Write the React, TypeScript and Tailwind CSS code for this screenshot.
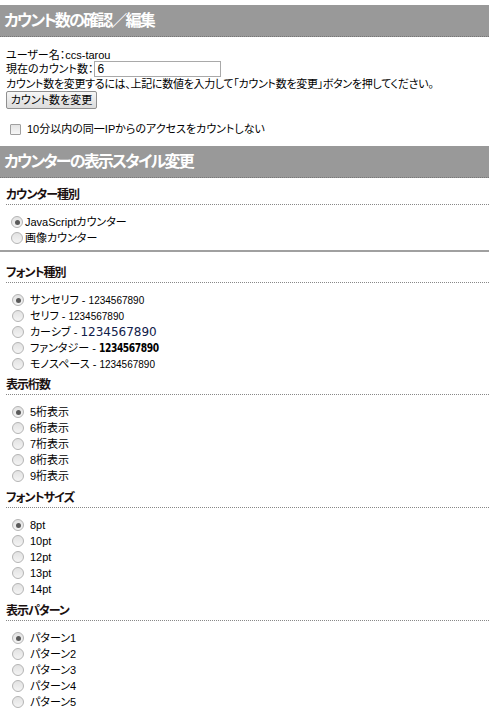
const jp = '"Liberation Sans", "Noto Sans CJK JP", sans-serif';

function Radio({ checked = false }: { checked?: boolean }) {
  return (
    <span className="inline-flex h-[12px] w-[12px] shrink-0 items-center justify-center rounded-full border border-[#b4b4b4] bg-gradient-to-b from-[#e2e2e2] to-[#f4f4f4]">
      {checked && <span className="h-[5px] w-[5px] rounded-full bg-[#5a5a5a]" />}
    </span>
  );
}

function Header({ title }: { title: string }) {
  return (
    <div className="flex h-8 items-center border-b border-dotted border-[#777] bg-[#999] pl-[4px]">
      <span className="text-[16px] font-bold tracking-[-1.8px] text-white" style={{ fontFeatureSettings: '"palt"' }}>
        {title}
      </span>
    </div>
  );
}

function SubHead({ label }: { label: string }) {
  return (
    <div className="ml-[6px] border-b border-dotted border-[#888] pb-[2px] text-[12px] font-bold leading-[14px] tracking-[-1px] text-[#1a1010]" style={{ fontFeatureSettings: '"palt"' }}>
      {label}
    </div>
  );
}

interface Opt {
  label: React.ReactNode;
}

function Options({ items, indent = 'pl-[12px]', gap = 'gap-[6px]' }: { items: Opt[]; indent?: string; gap?: string }) {
  return (
    <div className={`flex flex-col pt-[9px] ${indent}`}>
      {items.map((o, i) => (
        <div key={i} className={`flex h-[16px] items-center ${gap} text-[11px]`}>
          <Radio checked={i === 0} />
          <span style={{ fontFeatureSettings: '"palt"' }}>{o.label}</span>
        </div>
      ))}
    </div>
  );
}

export default function App() {
  const fonts: Opt[] = [
    { label: <>サンセリフ - <span className="text-[10px]">1234567890</span></> },
    { label: <>セリフ - <span className="text-[10px]">1234567890</span></> },
    { label: <>カーシブ - <span className="text-[12px] text-[#10204a]" style={{ fontFamily: '"DejaVu Sans", sans-serif' }}>1234567890</span></> },
    { label: <>ファンタジー - <span className="inline-block origin-left scale-x-[0.85] text-[12px] font-bold tracking-[-0.5px]" style={{ fontFamily: '"DejaVu Sans Condensed", "DejaVu Sans", sans-serif' }}>1234567890</span></> },
    { label: <>モノスペース - <span className="text-[10px]">1234567890</span></> },
  ];
  const digits = ['5桁表示', '6桁表示', '7桁表示', '8桁表示', '9桁表示'].map((l) => ({ label: l }));
  const sizes = ['8pt', '10pt', '12pt', '13pt', '14pt'].map((l) => ({ label: l }));
  const patterns = ['パターン1', 'パターン2', 'パターン3', 'パターン4', 'パターン5'].map((l) => ({ label: l }));

  return (
    <div className="min-h-[723px] w-[489px] bg-white pt-[5px] text-[11px] text-black" style={{ fontFamily: jp }}>
      <Header title="カウント数の確認／編集" />

      <div className="flex flex-col pl-[6px] pt-[11px] leading-[14px]" style={{ fontFeatureSettings: '"palt"' }}>
        <div className="h-[13px]">ユーザー名：ccs-tarou</div>
        <div className="flex h-[16px] items-center">
          <span>現在のカウント数：</span>
          <input
            defaultValue="6"
            className="ml-[1px] h-[16px] w-[127px] border border-[#a9a9a9] px-[2px] text-[12px] outline-none"
          />
        </div>
        <div className="h-[13px] whitespace-nowrap tracking-[-0.3px]">
          カウント数を変更するには、上記に数値を入力して「カウント数を変更」ボタンを押してください。
        </div>
        <div className="pt-[1px]">
          <button className="h-[18px] w-[91px] rounded-[2px] border border-[#8f8f8f] bg-gradient-to-b from-[#f6f6f6] to-[#dcdcdc] text-[11px] leading-[14px]">
            カウント数を変更
          </button>
        </div>
        <div className="flex items-center gap-[6px] pl-[4px] pt-[13px]">
          <span className="h-[11px] w-[11px] rounded-[1px] border border-[#a0a0a0] bg-gradient-to-b from-[#e4e4e4] to-[#f6f6f6]" />
          <span>10分以内の同一IPからのアクセスをカウントしない</span>
        </div>
      </div>

      <div className="pt-[10px]">
        <Header title="カウンターの表示スタイル変更" />
      </div>

      <div className="pt-[10px]">
        <SubHead label="カウンター種別" />
        <Options indent="pl-[11px]" gap="gap-[2px]" items={[{ label: 'JavaScriptカウンター' }, { label: '画像カウンター' }]} />
        <div className="mt-[4px] h-[2px] bg-[#a0a0a0]" />
      </div>

      <div className="pt-[14px]">
        <SubHead label="フォント種別" />
        <Options items={fonts} />
      </div>
      <div className="pt-[6px]">
        <SubHead label="表示桁数" />
        <Options items={digits} />
      </div>
      <div className="pt-[7px]">
        <SubHead label="フォントサイズ" />
        <Options items={sizes} />
      </div>
      <div className="pt-[7px]">
        <SubHead label="表示パターン" />
        <Options items={patterns} />
      </div>

      <div className="mt-[14px] h-[2px] w-[487px] bg-[#333]" />
    </div>
  );
}
